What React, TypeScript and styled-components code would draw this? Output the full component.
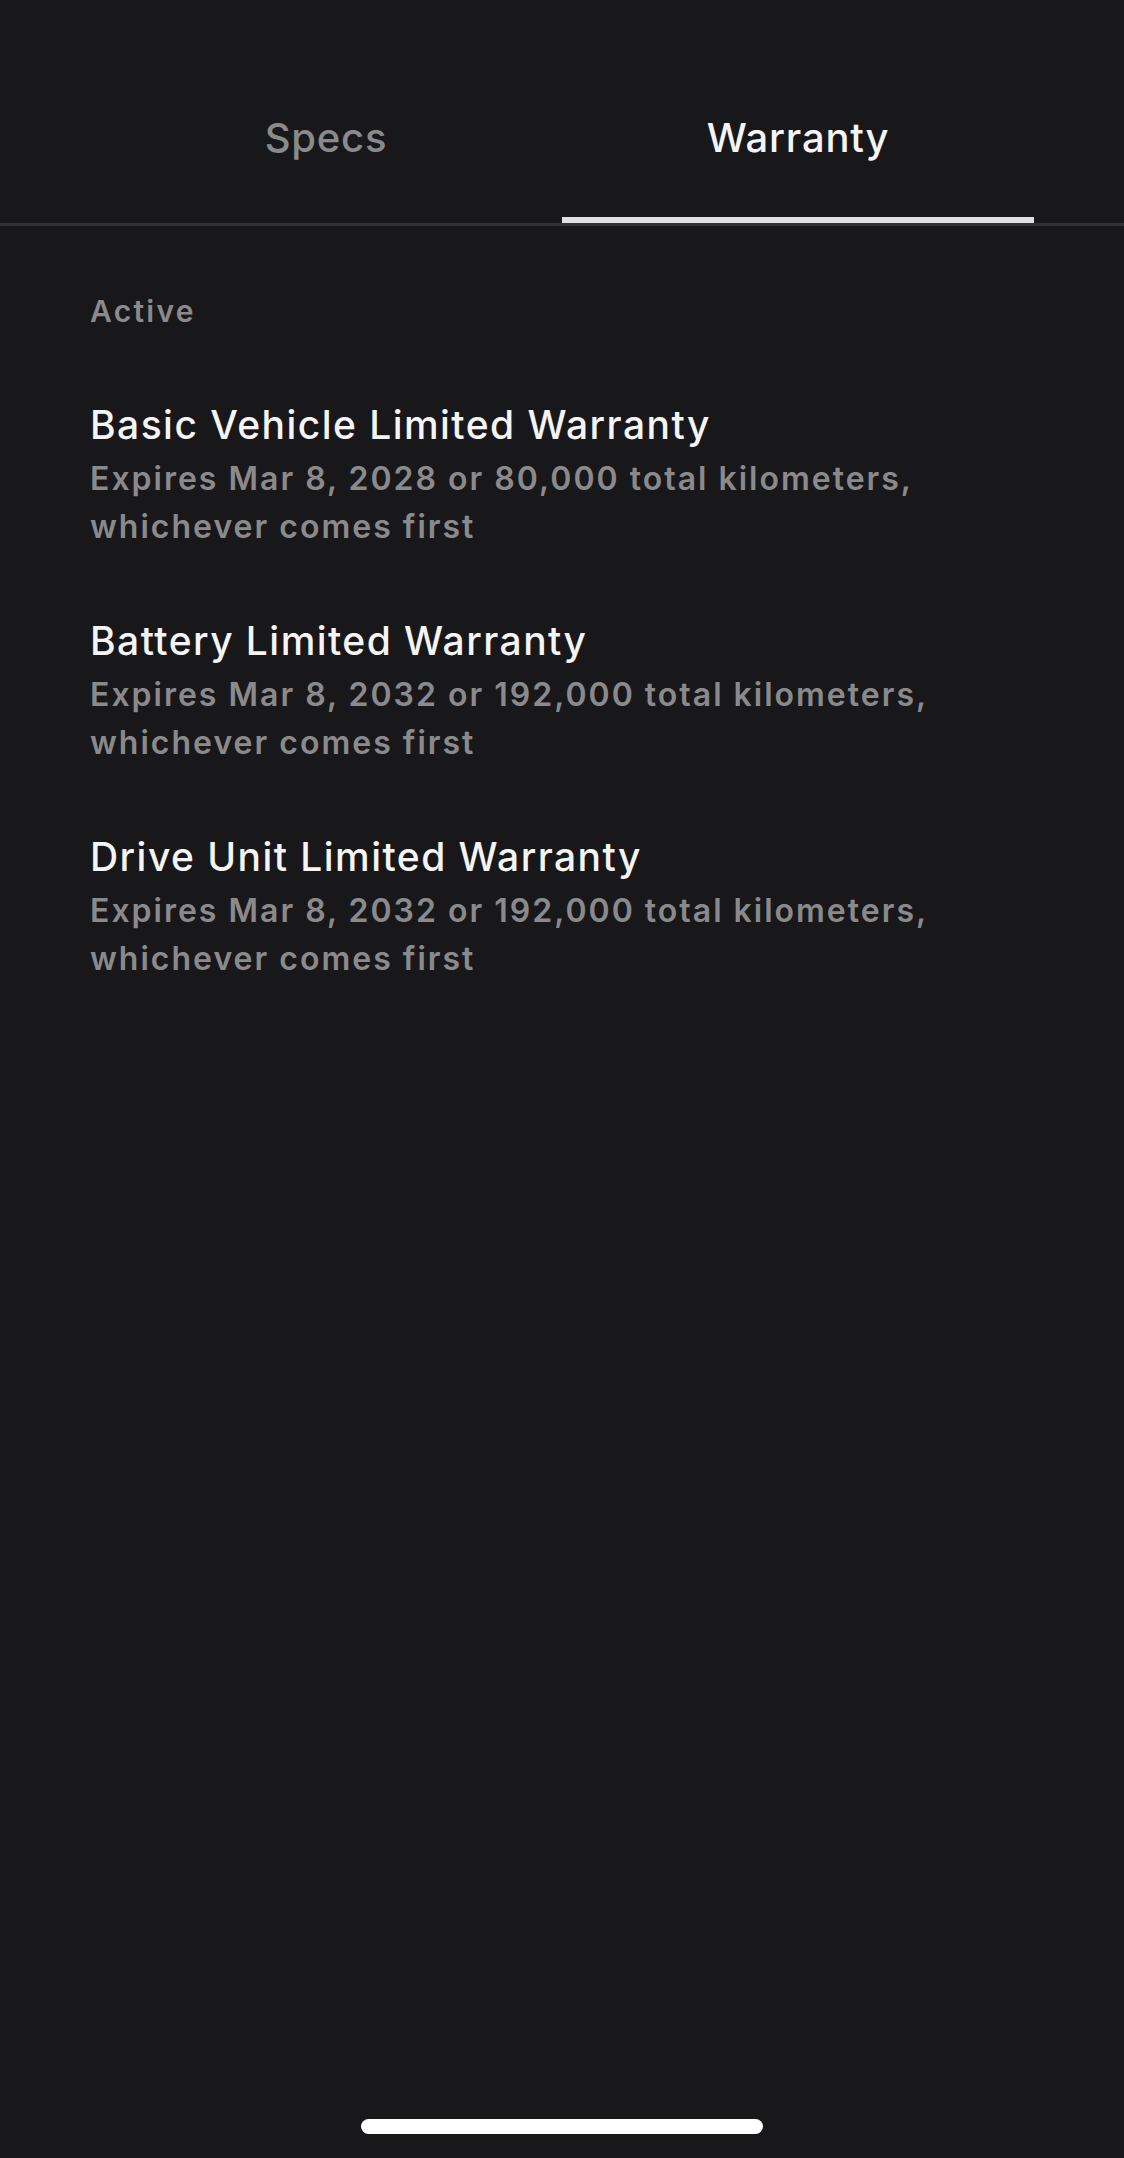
import React from "react";
import styled, { createGlobalStyle } from "styled-components";

const Global = createGlobalStyle`
  html, body { margin: 0; padding: 0; background: #18181a; }
  body { font-family: Inter, "Noto Sans", "Liberation Sans", sans-serif; -webkit-font-smoothing: antialiased; }
`;

const Screen = styled.div`
  width: 1124px;
  height: 2158px;
  background: #18181a;
  display: flex;
  flex-direction: column;
  overflow: hidden;
`;

const TabBar = styled.div`
  display: grid;
  grid-template-columns: 1fr 1fr;
  padding: 0 90px;
  border-bottom: 3px solid #323234;
`;

const Tab = styled.div<{ $active?: boolean }>`
  height: 223px;
  box-sizing: border-box;
  display: flex;
  justify-content: center;
  align-items: flex-start;
  padding-top: 114px;
  font-size: 40px;
  line-height: 48px;
  font-weight: 500;
  letter-spacing: 0.8px;
  color: ${(p) => (p.$active ? "#f4f4f4" : "#8a8a8c")};
  border-bottom: 6px solid ${(p) => (p.$active ? "#e0e0e0" : "transparent")};
`;

const Content = styled.div`
  flex: 1;
  display: flex;
  flex-direction: column;
  padding: 0 90px;
`;

const Section = styled.div`
  padding-top: 65px;
  font-size: 30px;
  line-height: 40px;
  font-weight: 600;
  letter-spacing: 2.3px;
  color: #8a8a8c;
`;

const List = styled.div`
  display: flex;
  flex-direction: column;
  gap: 66px;
  padding-top: 70px;
`;

const Item = styled.div`
  display: flex;
  flex-direction: column;
`;

const Title = styled.div`
  font-size: 39px;
  line-height: 48px;
  font-weight: 500;
  color: #f4f4f4;
  letter-spacing: 1.45px;
`;

const Desc = styled.div`
  margin-top: 6px;
  font-size: 32px;
  line-height: 48px;
  font-weight: 600;
  letter-spacing: 2px;
  color: #8a8a8c;
`;

const HomeBar = styled.div`
  align-self: center;
  width: 402px;
  height: 15px;
  border-radius: 8px;
  background: #ffffff;
  margin-bottom: 24px;
`;

const items = [
  {
    title: "Basic Vehicle Limited Warranty",
    line: "Expires Mar 8, 2028 or 80,000 total kilometers,",
  },
  {
    title: "Battery Limited Warranty",
    line: "Expires Mar 8, 2032 or 192,000 total kilometers,",
  },
  {
    title: "Drive Unit Limited Warranty",
    line: "Expires Mar 8, 2032 or 192,000 total kilometers,",
  },
];

export default function App() {
  return (
    <>
      <Global />
      <Screen>
        <TabBar>
          <Tab>Specs</Tab>
          <Tab $active>Warranty</Tab>
        </TabBar>
        <Content>
          <Section>Active</Section>
          <List>
            {items.map((it) => (
              <Item key={it.title}>
                <Title>{it.title}</Title>
                <Desc>
                  {it.line}
                  <br />
                  whichever comes first
                </Desc>
              </Item>
            ))}
          </List>
        </Content>
        <HomeBar />
      </Screen>
    </>
  );
}
